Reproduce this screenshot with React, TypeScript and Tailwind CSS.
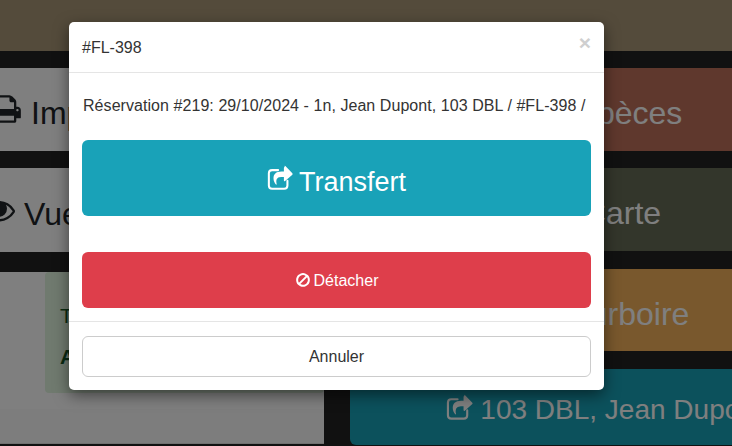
const font = { sans: "font-['Liberation_Sans',Arial,sans-serif]" };

const paths = {
  print:
    "M448 1536h896v-256h-896v256zm0-640h896v-384h-160q-40 0-68-28t-28-68v-160h-640v640zm1152 64q0-26-19-45t-45-19-45 19-19 45 19 45 45 19 45-19 19-45zm128 0v416q0 13-9.500 22.500t-22.500 9.500h-224v160q0 40-28 68t-68 28h-960q-40 0-68-28t-28-68v-160h-224q-13 0-22.500-9.500t-9.500-22.500v-416q0-79 56.500-135.500t135.500-56.500h64v-544q0-40 28-68t68-28h672q40 0 88 20t76 48l152 152q28 28 48 76t20 88v256h64q79 0 135.500 56.500t56.500 135.500z",
  eye: "M1664 960q-152-236-381-353 61 104 61 225 0 185-131.500 316.500t-316.500 131.500-316.500-131.500-131.500-316.500q0-121 61-225-229 117-381 353 133 205 333.500 326.500t434.500 121.500 434.500-121.500 333.500-326.500zm-720-384q0-20-14-34t-34-14q-125 0-214.500 89.500t-89.500 214.500q0 20 14 34t34 14 34-14 14-34q0-86 61-147t147-61q20 0 34-14t14-34zm848 384q0 34-20 69-140 230-376.500 368.500t-499.500 138.500-499.500-139-376.500-368q-20-35-20-69t20-69q140-229 376.500-368t499.500-139 499.500 139 376.500 368q20 35 20 69z",
  ban: "M1440 893q0-161-87-295l-754 753q137 89 297 89 111 0 211.500-43.500t173.500-116.500 116-174.500 43-212.500zm-999 299l755-754q-135-91-300-91-148 0-273 73t-198 199-73 274q0 162 89 299zm1223-299q0 157-61 300t-163.500 246-245 164-298.500 61-298.500-61-245-164-163.500-246-61-300 61-299.500 163.500-245.500 245-164 298.500-61 298.500 61 245 164 163.500 245.500 61 299.500z",
};

function Icon({ d, size }: { d: string; size: number }) {
  return (
    <svg width={size} height={size} viewBox="0 0 1792 1792" fill="currentColor" className="shrink-0">
      <path d={d} />
    </svg>
  );
}

// box with an open corner and a solid arrow, like fa-share-square-o
function ShareIcon({ size }: { size: number }) {
  return (
    <svg width={size} height={size} viewBox="0 0 28 26" className="shrink-0">
      <path
        d="M12 4.500H5.500Q2 4.500 2 8v13q0 3.500 3.500 3.500h13q3.500 0 3.500-3.500v-5"
        fill="none"
        stroke="currentColor"
        strokeWidth="2.200"
        strokeLinecap="round"
      />
      <path
        d="M19 1.200q-.8 0-.8 1V6h-2.500C9.500 6 7 9 7 13.500c0 2.500 1.200 4.800 2.600 6.500.5.400 1 0 .8-.5-.8-3.800-.2-6.500 2.800-7.300 1.300-.4 3-.4 5-.4v3.900q0 1.200 1.300.6l7.800-6.900q.6-.7 0-1.400l-7.500-7.800q-.4-.4-.8-.4z"
        fill="currentColor"
      />
    </svg>
  );
}

function LeftButton({ icon, label, className }: { icon: React.ReactNode; label: string; className: string }) {
  return (
    <div className={`bg-white flex items-center text-[#212529] text-[32px] gap-[9px] ${className}`}>
      <span className="-mt-[1px]">{icon}</span>
      <span className="pt-[7px]">{label}</span>
    </div>
  );
}

function RightButton({ children, className }: { children: React.ReactNode; className: string }) {
  return (
    <div className={`flex items-center justify-center text-white whitespace-nowrap ${className}`}>
      {children}
    </div>
  );
}

export default function App() {
  return (
    <div className={`relative w-[732px] h-[446px] overflow-hidden bg-[#222222] ${font.sans}`}>
      {/* Page behind the modal */}
      <div className="h-[51px] bg-[#a89676]" />
      <div className="grid grid-cols-[324px_1fr] pt-[17px]">
        <div className="flex flex-col">
          <LeftButton icon={<Icon d={paths.print} size={32} />} label="Imprimer" className="h-[83px] -ml-[10px]" />
          <LeftButton icon={<Icon d={paths.eye} size={32} />} label="Vue" className="h-[84px] mt-[17px] -ml-[17px]" />
          <div className="mt-[20px] h-[137px] bg-white pl-[45px]">
            <div className="h-[121px] bg-[#e0f5df] rounded-[4px] pl-[15px] pt-[28px] text-[#155724] text-[21px] leading-[32px]">
              <p>Total</p>
              <p className="mt-[9px] font-bold">A payer</p>
            </div>
          </div>
          <div className="h-[35px] bg-[#fafafa] border-b border-[#e0e0e0]" />
        </div>
        <div className="flex flex-col pl-[26px] gap-[17px]">
          <RightButton className="w-[542px] h-[83px] bg-[#be705a] text-[32px]">
            <span className="pt-[7px]">Espèces</span>
          </RightButton>
          <RightButton className="w-[544px] h-[83px] bg-[#666c56] text-[32px]">
            <span className="pt-[7px]">Carte</span>
          </RightButton>
          <RightButton className="w-[540px] h-[82px] mt-[1px] bg-[#f2b05a] text-[32px]">
            <span className="pt-[7px]">Pourboire</span>
          </RightButton>
          <RightButton className="w-[510px] h-[76px] mt-[1px] bg-[#19a2b8] rounded-[6px] gap-[7px] text-[28px]">
            <ShareIcon size={27} />
            <span className="pt-[6px]">103 DBL, Jean Dupont</span>
          </RightButton>
        </div>
      </div>

      {/* Backdrop */}
      <div className="absolute inset-0 bg-black/50" />

      {/* Modal */}
      <div className="absolute left-[69px] top-[22px] w-[535px] h-[368px] bg-white rounded-[5px] shadow-[0_5px_15px_rgba(0,0,0,0.5)] flex flex-col">
        <div className="h-[51px] px-[13px] border-b border-[#e5e5e5] flex items-center justify-between">
          <span className="pt-[2px] text-[16px] text-[#333333]">#FL-398</span>
          <span className="text-[21px] font-bold leading-none text-[#cfcfcf] -mt-[9px]">×</span>
        </div>
        <div className="flex-1 px-[13px] flex flex-col">
          <p className="mt-[23px] text-[16px] leading-[20px] tracking-[0.06px] text-[#333333] whitespace-nowrap pl-[1px]">
            Réservation #219: 29/10/2024 - 1n, Jean Dupont, 103 DBL / #FL-398 /
          </p>
          <div className="mt-[24px] h-[76px] bg-[#19a2b8] rounded-[6px] text-white text-[27px] flex items-center justify-center gap-[6px]">
            <ShareIcon size={26} />
            <span className="pt-[8px]">Transfert</span>
          </div>
          <div className="mt-[36px] h-[56px] bg-[#de3e4b] rounded-[6px] text-white text-[16px] flex items-center justify-center gap-[3px]">
            <Icon d={paths.ban} size={16} />
            <span className="pt-[1px]">Détacher</span>
          </div>
        </div>
        <div className="h-[69px] border-t border-[#e5e5e5] px-[13px] pt-[14px]">
          <div className="h-[41px] border border-[#cccccc] rounded-[6px] bg-white text-[16px] text-[#333333] flex items-center justify-center">
            Annuler
          </div>
        </div>
      </div>
    </div>
  );
}
